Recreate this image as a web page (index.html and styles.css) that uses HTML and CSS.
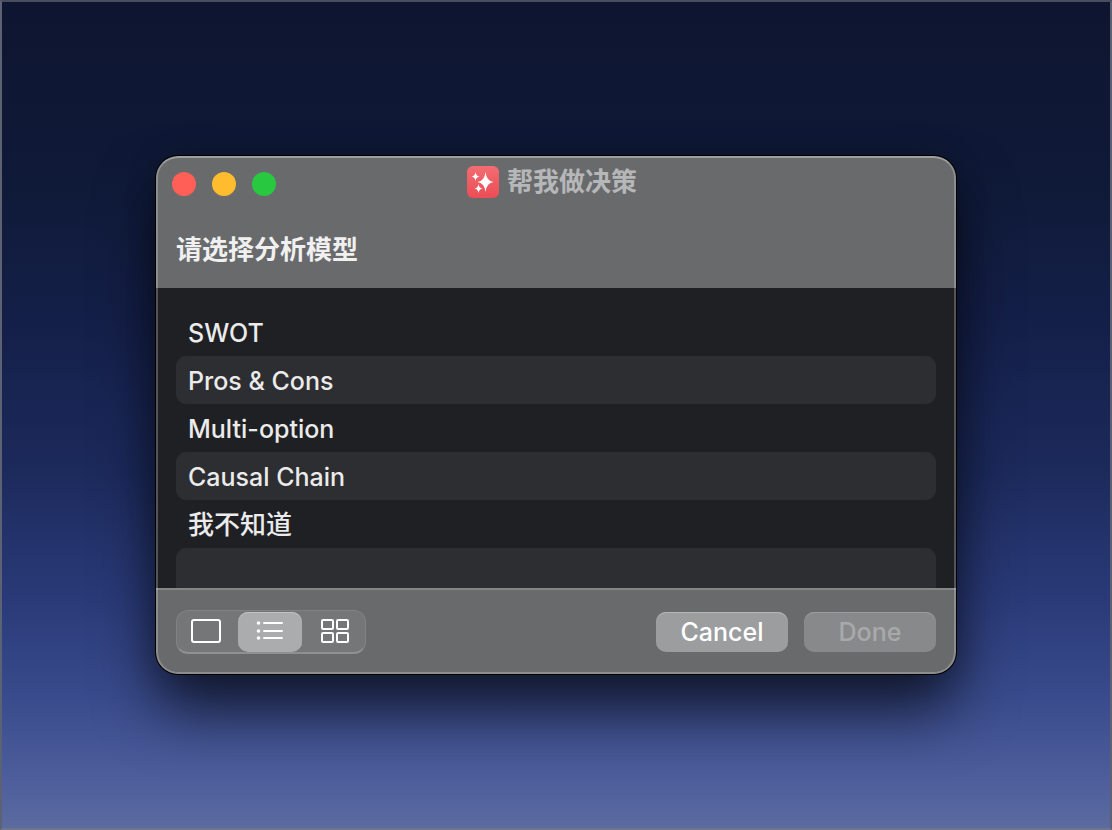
FILE: index.html
```html
<!DOCTYPE html>
<html lang="en">

<head>
    <meta charset="UTF-8">
    <meta name="viewport" content="width=device-width, initial-scale=1.0">
    <title>帮我做决策</title>
    <link rel="stylesheet" href="styles.css">
</head>

<body>
    <main class="window">
        <header class="header">
            <div class="titlebar">
                <div class="lights">
                    <button type="button" class="light light-close" aria-label="Close"></button>
                    <button type="button" class="light light-minimize" aria-label="Minimize"></button>
                    <button type="button" class="light light-zoom" aria-label="Zoom"></button>
                </div>
                <h1 class="title" lang="zh-CN">
                    <svg class="app-icon" viewBox="0 0 32 32" aria-hidden="true">
                        <defs>
                            <linearGradient id="red" x1="0" y1="0" x2="0" y2="1">
                                <stop offset="0" stop-color="#f26d72" />
                                <stop offset="1" stop-color="#ec4c55" />
                            </linearGradient>
                        </defs>
                        <rect width="32" height="32" rx="6" fill="url(#red)" />
                        <g fill="#fff">
                            <path d="M18.5 6Q19.5 15 26.5 16Q19.5 17 18.5 26Q17.5 17 10.5 16Q17.5 15 18.5 6Z" />
                            <path d="M8.5 6Q9 10 12.5 10.5Q9 11 8.5 15Q8 11 4.5 10.5Q8 10 8.5 6Z" />
                            <path d="M11.5 18Q12 22 15.5 22.5Q12 23 11.5 27Q11 23 7.5 22.5Q11 22 11.5 18Z" />
                        </g>
                    </svg>
                    帮我做决策
                </h1>
            </div>
            <h2 class="prompt" lang="zh-CN">请选择分析模型</h2>
        </header>

        <ul class="list">
            <li class="row"><button type="button">SWOT</button></li>
            <li class="row"><button type="button">Pros &amp; Cons</button></li>
            <li class="row"><button type="button">Multi-option</button></li>
            <li class="row"><button type="button">Causal Chain</button></li>
            <li class="row" lang="zh-CN"><button type="button">我不知道</button></li>
            <li class="row" aria-hidden="true"></li>
        </ul>

        <footer class="footer">
            <div class="views" role="radiogroup" aria-label="View">
                <label class="view">
                    <input type="radio" name="view" value="single" aria-label="Single">
                    <svg viewBox="0 0 32 28" aria-hidden="true">
                        <rect x="1" y="2" width="28" height="22" rx="2" />
                    </svg>
                </label>
                <label class="view view-list">
                    <input type="radio" name="view" value="list" aria-label="List" checked>
                    <svg viewBox="0 0 32 28" aria-hidden="true">
                        <path d="M10 5H28M10 13H28M10 20H28" />
                        <g fill="#fff" stroke="none">
                            <circle cx="4.5" cy="5" r="1.8" />
                            <circle cx="4.5" cy="13" r="1.8" />
                            <circle cx="4.5" cy="20" r="1.8" />
                        </g>
                    </svg>
                </label>
                <label class="view view-grid">
                    <input type="radio" name="view" value="grid" aria-label="Grid">
                    <svg viewBox="0 0 32 28" aria-hidden="true">
                        <rect x="4" y="2" width="11" height="9" rx="1" />
                        <rect x="19" y="2" width="11" height="9" rx="1" />
                        <rect x="4" y="15" width="11" height="9" rx="1" />
                        <rect x="19" y="15" width="11" height="9" rx="1" />
                    </svg>
                </label>
            </div>
            <div class="actions">
                <button type="button" class="btn">Cancel</button>
                <button type="button" class="btn" disabled>Done</button>
            </div>
        </footer>
    </main>
</body>

</html>
```
FILE: styles.css
```css
/* Reset */
* {
    margin: 0;
    padding: 0;
    box-sizing: border-box;
}

/* Desktop */
body {
    font-family: Inter, "Noto Sans CJK SC", sans-serif;
    font-size: 25px;
    line-height: 32px;
    color: #ebebeb;
    background: linear-gradient(#0e1530 0%, #0f1a38 22%, #141f48 38%, #1c2a5c 57%, #2a3a78 72%, #394b8c 84%, #4e5e9c 94%, #5c6ba0 100%);
    display: flex;
    justify-content: center;
    align-items: center;
    min-height: 100vh;
    padding: 24px;
    border: 2px solid;
    border-color: #494e5c #5c6274 #70758a #5c6274;
    background-origin: border-box;
}

:lang(zh) {
    font-size: 26px;
}

button {
    font: inherit;
    color: inherit;
    border: none;
    background: none;
}

/* Window */
.window {
    position: relative;
    width: 100%;
    max-width: 800px;
    border-radius: 22px;
    overflow: hidden;
    background: #696a6c;
    box-shadow: 0 0 0 1px #000, 0 36px 60px rgba(0, 0, 0, 0.65), 0 0 30px rgba(0, 0, 0, 0.2);
}

/* Light rim over the window's edge */
.window::after {
    content: "";
    position: absolute;
    inset: 0;
    border: 2px solid rgba(255, 255, 255, 0.24);
    border-top-color: rgba(255, 255, 255, 0.36);
    border-radius: inherit;
    pointer-events: none;
}

/* Header */
.header {
    padding: 8px 20px 22px;
}

.titlebar {
    display: grid;
    grid-template-columns: 1fr auto 1fr;
    align-items: center;
    height: 40px;
    margin: 0 -4px 30px;
}

.lights {
    display: flex;
    gap: 16px;
}

.light {
    width: 24px;
    height: 24px;
    border-radius: 50%;
}

.light-close {
    background: #ff5f57;
}

.light-minimize {
    background: #febc2e;
}

.light-zoom {
    background: #28c840;
}

.title {
    display: flex;
    align-items: center;
    gap: 8px;
    padding: 0 8px 4px 0;
    font-weight: 700;
    color: #b6b7b8;
}

.app-icon {
    width: 32px;
    height: 32px;
}

.prompt {
    font-weight: 700;
    color: #f0f0f0;
}

/* List */
.list {
    height: 300px;
    padding: 20px 20px 0;
    overflow: hidden;
    list-style: none;
    background: #1f2024;
}

.row {
    height: 48px;
    border-radius: 10px;
}

.row:nth-child(even) {
    background: #2d2e31;
}

.row button {
    display: block;
    width: 100%;
    height: 100%;
    padding: 2px 12px 0;
    font-weight: 500;
    text-align: left;
}

/* Footer */
.footer {
    display: flex;
    justify-content: space-between;
    align-items: center;
    padding: 20px;
    border-top: 2px solid #858687;
}

.views {
    display: flex;
    gap: 1px;
    padding-top: 1px;
    border: 1px solid #818284;
    border-bottom: 2px solid #8f9092;
    border-radius: 12px;
    background: #757678;
}

.view {
    display: grid;
    place-items: center;
    width: 60px;
    height: 40px;
    border-radius: 10px;
}

.view-list {
    width: 64px;
}

.view-grid {
    width: 62px;
}

.view:has(input:checked) {
    background: #abacae;
    box-shadow: inset 0 1px #c0c1c2;
}

.view input {
    grid-area: 1 / 1;
    width: 100%;
    height: 100%;
    appearance: none;
}

.view svg {
    grid-area: 1 / 1;
    width: 32px;
    height: 28px;
    fill: none;
    stroke: #fff;
    stroke-width: 2;
    stroke-linecap: round;
}

.actions {
    display: flex;
    gap: 16px;
}

.btn {
    width: 132px;
    height: 40px;
    border-radius: 10px;
    font-weight: 500;
    color: #fff;
    background: #9c9d9f;
    box-shadow: inset 0 1px #b6b7b8;
}

.btn:disabled {
    color: #a8a9ab;
    background: #88898b;
    box-shadow: inset 0 1px #9c9d9e;
}
```
